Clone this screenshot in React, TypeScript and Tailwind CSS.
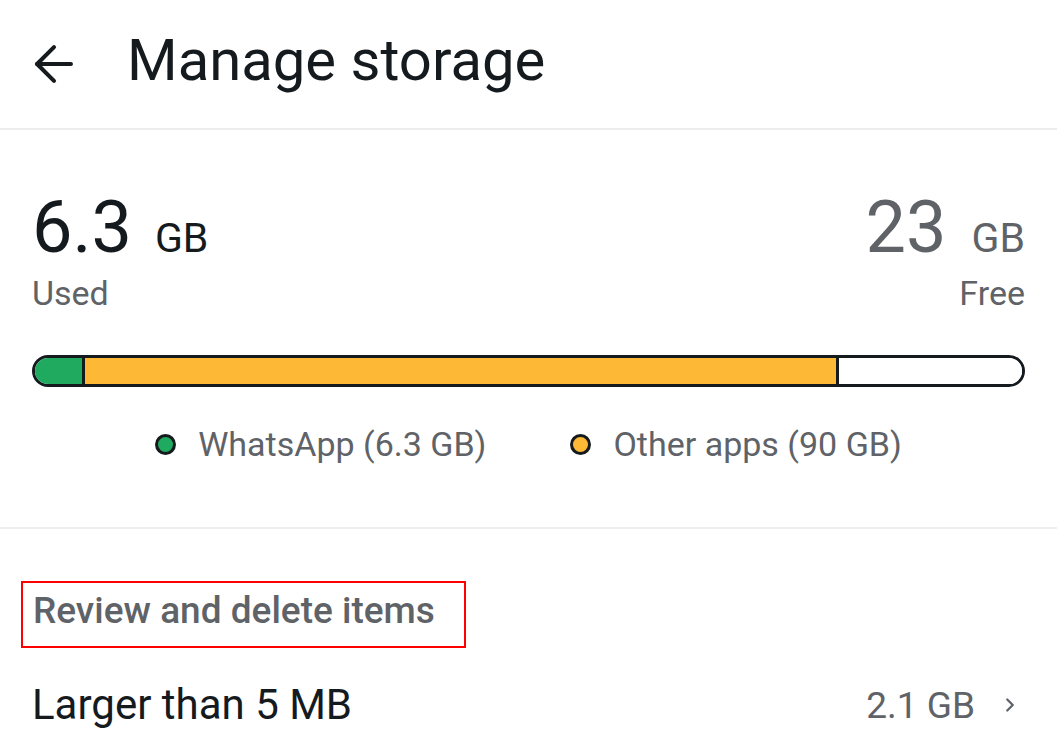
import { ArrowLeft, ChevronRight } from "lucide-react";

const legend = [
    { label: "WhatsApp (6.3 GB)", dot: "bg-[#1faa5f]" },
    { label: "Other apps (90 GB)", dot: "bg-[#fdb835]" },
];

export default function App() {
    return (
        <div className="w-[1057px] h-[746px] overflow-hidden bg-white text-[#151a1e]" style={{ fontFamily: "Roboto, 'Noto Sans', sans-serif" }}>
            {/* top bar */}
            <div className="h-[130px] flex items-center border-b-2 border-[#ededed]">
                <ArrowLeft className="ml-[25px] w-[58px] h-[58px]" strokeWidth={1.7} />
                <h1 className="ml-[44px] text-[58px] leading-none pb-[8px]">Manage storage</h1>
            </div>

            {/* usage summary */}
            <div className="px-[32px] pt-[62px] pb-[66px] border-b-2 border-[#efefef]">
                <div className="flex justify-between items-end">
                    <div>
                        <div className="flex items-baseline">
                            <span className="text-[72px] leading-none">6.3</span>
                            <span className="ml-[23px] text-[41px] leading-none">GB</span>
                        </div>
                        <div className="mt-[12px] text-[34px] leading-none text-[#5f6368]">Used</div>
                    </div>
                    <div className="flex flex-col items-end text-[#5f6368]">
                        <div className="flex items-baseline">
                            <span className="text-[72px] leading-none">23</span>
                            <span className="ml-[25px] text-[41px] leading-none">GB</span>
                        </div>
                        <div className="mt-[12px] text-[34px] leading-none">Free</div>
                    </div>
                </div>

                <div className="mt-[45px] h-[32px] flex rounded-full border-[3px] border-[#151a1e] overflow-hidden">
                    <div className="w-[50px] bg-[#1faa5f] border-r-[3px] border-[#151a1e]" />
                    <div className="w-[754px] bg-[#fdb835] border-r-[3px] border-[#151a1e]" />
                    <div className="flex-1 bg-white" />
                </div>

                <div className="mt-[40px] flex justify-center gap-[84px]">
                    {legend.map((item) => (
                        <div key={item.label} className="flex items-center gap-[22px]">
                            <span className={`w-[21px] h-[21px] rounded-full border-[3px] border-[#151a1e] ${item.dot}`} />
                            <span className="text-[34px] leading-none text-[#5f6368]">{item.label}</span>
                        </div>
                    ))}
                </div>
            </div>

            {/* review */}
            <div className="px-[21px] pt-[52px]">
                <div className="w-[445px] h-[67px] border-2 border-[#ff0000] flex items-center px-[10px] pb-[8px]">
                    <span className="text-[37px] font-medium leading-none text-[#5f6368]">Review and delete items</span>
                </div>
            </div>
            <div className="pl-[32px] pr-[36px] pt-[36px] flex items-center justify-between">
                <span className="text-[42px] leading-none">Larger than 5 MB</span>
                <div className="flex items-center text-[#5f6368]">
                    <span className="text-[37px] leading-none">2.1 GB</span>
                    <ChevronRight className="ml-[24px] w-[22px] h-[22px]" strokeWidth={2.5} />
                </div>
            </div>
        </div>
    );
}
